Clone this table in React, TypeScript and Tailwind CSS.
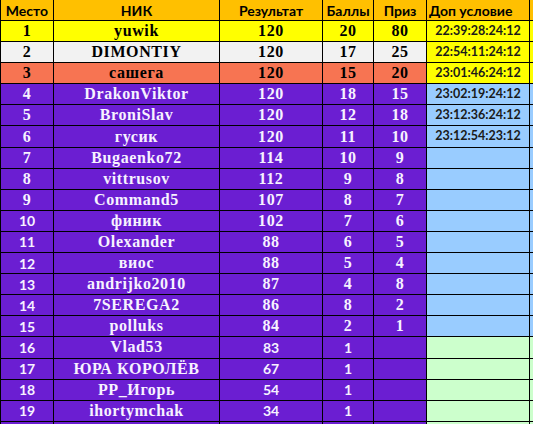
type Row = {
  place: number;
  nick: string;
  result: number;
  points: number;
  prize?: number;
  extra?: string;
};

const rows: Row[] = [
  { place: 1, nick: "yuwik", result: 120, points: 20, prize: 80, extra: "22:39:28:24:12" },
  { place: 2, nick: "DIMONTIY", result: 120, points: 17, prize: 25, extra: "22:54:11:24:12" },
  { place: 3, nick: "сашега", result: 120, points: 15, prize: 20, extra: "23:01:46:24:12" },
  { place: 4, nick: "DrakonViktor", result: 120, points: 18, prize: 15, extra: "23:02:19:24:12" },
  { place: 5, nick: "BroniSlav", result: 120, points: 12, prize: 18, extra: "23:12:36:24:12" },
  { place: 6, nick: "гусик", result: 120, points: 11, prize: 10, extra: "23:12:54:23:12" },
  { place: 7, nick: "Bugaenko72", result: 114, points: 10, prize: 9 },
  { place: 8, nick: "vittrusov", result: 112, points: 9, prize: 8 },
  { place: 9, nick: "Command5", result: 107, points: 8, prize: 7 },
  { place: 10, nick: "финик", result: 102, points: 7, prize: 6 },
  { place: 11, nick: "Olexander", result: 88, points: 6, prize: 5 },
  { place: 12, nick: "виос", result: 88, points: 5, prize: 4 },
  { place: 13, nick: "andrijko2010", result: 87, points: 4, prize: 8 },
  { place: 14, nick: "7SEREGA2", result: 86, points: 8, prize: 2 },
  { place: 15, nick: "polluks", result: 84, points: 2, prize: 1 },
  { place: 16, nick: "Vlad53", result: 83, points: 1 },
  { place: 17, nick: "ЮРА КОРОЛЁВ", result: 67, points: 1 },
  { place: 18, nick: "РР_Игорь", result: 54, points: 1 },
  { place: 19, nick: "ihortymchak", result: 34, points: 1 },
];

const serif = "font-['Liberation_Serif',serif] font-bold text-[16px] tracking-[0.6px]";
const sans = "font-['Lato',sans-serif] font-bold text-[14px]";
const time = "font-['Lato',sans-serif] font-bold text-[12.5px]";

function rowBg(place: number) {
  if (place === 1) return "bg-[#ffff00] text-black";
  if (place === 2) return "bg-[#f2f2f2] text-black";
  if (place === 3) return "bg-[#f77452] text-black";
  return "bg-[#6b1ed2] text-[#f7f2ff]";
}

function extraBg(place: number) {
  if (place <= 3) return "bg-[#ffff00]";
  if (place <= 15) return "bg-[#99ccff]";
  return "bg-[#ccffcc]";
}

function Cell({ w, className, children }: { w: string; className?: string; children?: React.ReactNode }) {
  return (
    <div className={`${w} shrink-0 h-full flex items-center justify-center border-r border-black whitespace-nowrap ${className ?? ""}`}>
      {children}
    </div>
  );
}

export default function App() {
  return (
    <div className="w-[533px] h-[424px] overflow-hidden bg-white">
      <div className="w-[560px] border-l border-black">
        <div className={`flex h-[21px] border-b border-black bg-[#ffc000] text-black ${sans}`}>
          <Cell w="w-[53px]">Место</Cell>
          <Cell w="w-[166px]">НИК</Cell>
          <Cell w="w-[103px]">Результат</Cell>
          <Cell w="w-[51px]">Баллы</Cell>
          <Cell w="w-[53px]">Приз</Cell>
          <Cell w="w-[103px]" className="!justify-start pl-[2px]">Доп условие</Cell>
          <Cell w="w-[30px]" />
        </div>
        {rows.map((r) => {
          const late = r.place >= 16;
          return (
            <div key={r.place} className={`flex h-[21.1px] border-b border-black ${rowBg(r.place)}`}>
              <Cell w="w-[53px]" className={r.place >= 10 ? sans : serif}>{r.place}</Cell>
              <Cell w="w-[166px]" className={serif}>{r.nick}</Cell>
              <Cell w="w-[103px]" className={late ? sans : serif}>{r.result}</Cell>
              <Cell w="w-[51px]" className={late ? sans : serif}>{r.points}</Cell>
              <Cell w="w-[53px]" className={serif}>{r.prize ?? ""}</Cell>
              <Cell w="w-[103px]" className={`${extraBg(r.place)} text-[#1a1a1a] ${time}`}>{r.extra ?? ""}</Cell>
              <Cell w="w-[30px]" className={extraBg(r.place)} />
            </div>
          );
        })}
        <div className="flex h-[21px] bg-[#6b1ed2]">
          <Cell w="w-[53px]" />
          <Cell w="w-[166px]" />
          <Cell w="w-[103px]" />
          <Cell w="w-[51px]" />
          <Cell w="w-[53px]" />
          <Cell w="w-[103px]" className="bg-[#ccffcc]" />
          <Cell w="w-[30px]" className="bg-[#ccffcc]" />
        </div>
      </div>
    </div>
  );
}
